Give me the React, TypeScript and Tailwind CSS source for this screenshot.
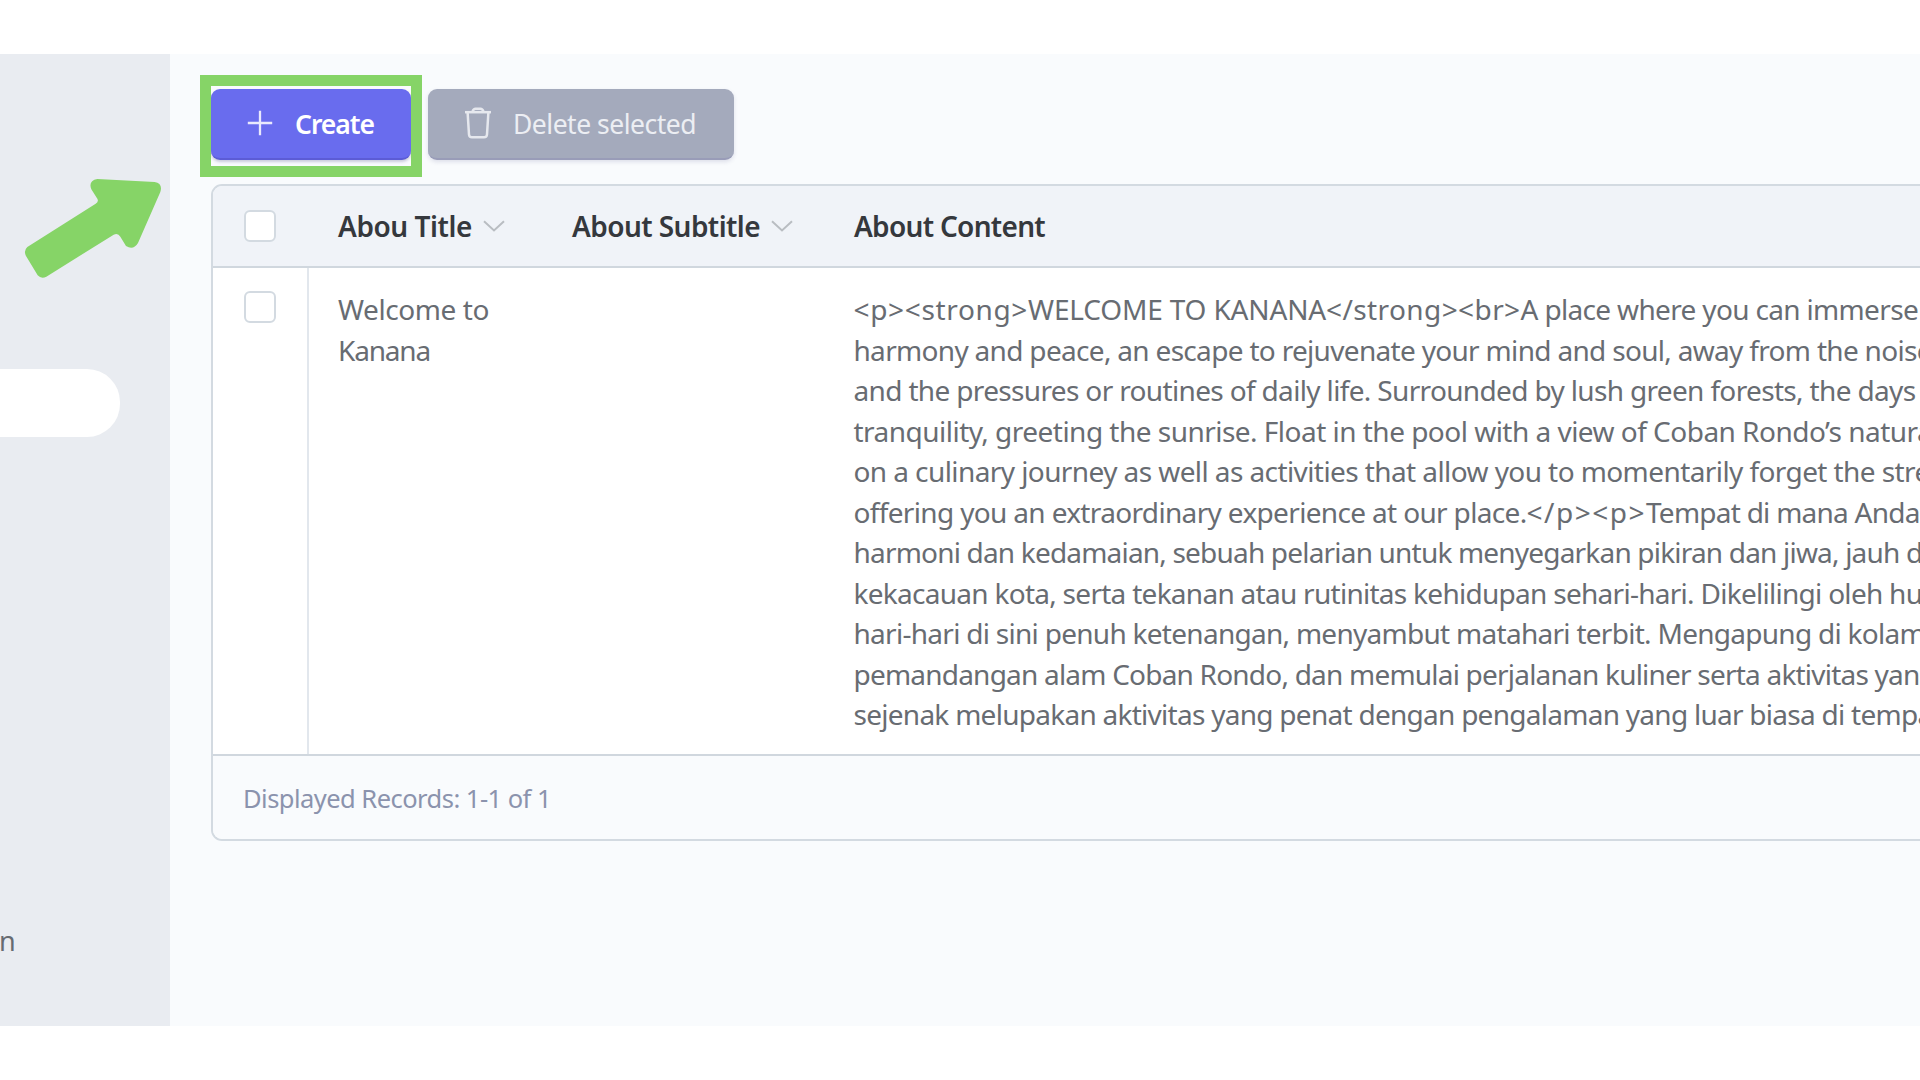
import React from "react";

const FAMILY = '"Noto Sans", "Open Sans", sans-serif';
const ctx = document.createElement("canvas").getContext("2d")!;

type FitProps = {
  text: string;
  width: number;
  size?: number;
  weight?: number;
  tail?: string;
  className?: string;
};

// One run of text, tracked so that `text` spans `width` pixels; `tail` continues it.
function Fit({ text, width, size = 28, weight = 400, tail = "", className = "" }: FitProps) {
  ctx.font = `${weight} ${size}px ${FAMILY}`;
  const spacing = (width - ctx.measureText(text).width) / text.length;
  return (
    <span
      className={`block whitespace-pre ${className}`}
      style={{ fontSize: size, fontWeight: weight, letterSpacing: `${spacing.toFixed(3)}px` }}
    >
      {text + tail}
    </span>
  );
}

type Run = [text: string, width: number, tail?: string];

const LINES: Run[][] = [
  [
    ["<p><strong>", 174.5],
    ["WELCOME TO KANANA", 298],
    ["</strong><br>", 194.5],
    ["A place where you can immerse", 397.5],
  ],
  [["harmony and peace, an escape to rejuvenate your mind and soul, away from the", 1004.5, " noise"]],
  [["and the pressures or routines of daily life. Surrounded by lush green forests, the days", 1062]],
  [["tranquility, greeting the sunrise. Float in the pool with a view of Coban Rondo’s", 988, " natural"]],
  [["on a culinary journey as well as activities that allow you to momentarily forget the", 1021.5, " stress"]],
  [
    ["offering you an extraordinary experience at our place.", 673],
    ["</p><p>", 119.5],
    ["Tempat di mana", 202, " Anda"],
  ],
  [["harmoni dan kedamaian, sebuah pelarian untuk menyegarkan pikiran dan jiwa, jauh", 1046, " dari"]],
  [["kekacauan kota, serta tekanan atau rutinitas kehidupan sehari-hari. Dikelilingi oleh", 1029, " hutan"]],
  [["hari-hari di sini penuh ketenangan, menyambut matahari terbit. Mengapung di", 987.5, " kolam"]],
  [["pemandangan alam Coban Rondo, dan memulai perjalanan kuliner serta aktivitas", 1014.5, " yang"]],
  [["sejenak melupakan aktivitas yang penat dengan pengalaman yang luar biasa di", 991, " tempat"]],
];

function Checkbox() {
  return <div className="h-8 w-8 shrink-0 rounded-[6px] border-2 border-[#d3dae1] bg-white" />;
}

function Chevron() {
  return (
    <svg className="h-3 w-[22px]" viewBox="0 0 22 12" fill="none" stroke="#b9bdc2" strokeWidth="2">
      <path d="M1 1.2 11 10.4 21 1.2" />
    </svg>
  );
}

export default function App() {
  return (
    <div className="h-[1080px] w-[1920px] overflow-hidden bg-white pt-[54px] font-['Noto_Sans','Open_Sans',sans-serif]">
      <div className="relative flex h-[972px]">
        <aside className="w-[170px] shrink-0 bg-[#e9ecf1] pt-[314.5px]">
          <div className="h-[68px] w-[120px] rounded-r-[33px] bg-white" />
          <div className="mt-[484.5px] h-10 leading-10 text-[#666b72]">
            <Fit text="n" width={17} size={27} className="-ml-px" />
          </div>
        </aside>

        <main className="min-w-0 flex-1 overflow-hidden bg-[#f9fbfd] pl-[41px] pt-[35px]">
          <div className="flex gap-[17px] leading-10">
            <button className="flex h-[71px] w-[200px] items-center rounded-[9px] border-b-2 border-[#5c5cd6] bg-[#696cee] pl-9 text-white shadow-[0_2px_3px_rgba(60,60,120,0.25)]">
              <svg className="-mt-0.5 mr-[22px] h-[26px] w-[26px]" viewBox="0 0 26 26" stroke="#e9e9fd" strokeWidth="2.3">
                <path d="M13 .8v24.4M.8 13h24.4" />
              </svg>
              <Fit text="Create" width={79} size={26.5} weight={600} />
            </button>
            <button className="flex h-[71px] w-[306px] items-center rounded-[9px] border-b-2 border-[#999cb8] bg-[#a4aabc] pl-9 text-[#eceef3] shadow-[0_2px_4px_rgba(60,60,120,0.14)]">
              <svg className="-mt-0.5 mr-[21px] h-8 w-7" viewBox="0 0 28 32" fill="none" stroke="#e6e8ee" strokeWidth="2.5" strokeLinejoin="round">
                <path d="M1 5.2h26" />
                <path d="M8.5 4.6Q9.5 1.7 11.5 1.7h5Q18.500 1.700 19.500 4.600" />
                <path d="M3.600 5.500 5 27.500Q5.200 30.300 8 30.300H20Q22.800 30.300 23 27.500L24.400 5.500" />
              </svg>
              <Fit text="Delete selected" width={183} size={26.5} />
            </button>
          </div>

          <section className="mt-[24px] w-[1760px] rounded-l-[11px] border-2 border-[#d3dae1]">
            <header className="flex h-[82px] items-center rounded-tl-[9px] border-b-2 border-[#d0d7de] bg-[#f0f3f8] pl-[31px] leading-10 text-[#35383d]">
              <Checkbox />
              <div className="ml-[62px] flex w-[234px] shrink-0 items-center gap-[11px]">
                <Fit text="Abou Title" width={134} weight={600} />
                <Chevron />
              </div>
              <div className="flex w-[282px] shrink-0 items-center gap-[11px]">
                <Fit text="About Subtitle" width={188} weight={600} />
                <Chevron />
              </div>
              <Fit text="About Content" width={191} weight={600} />
            </header>
            <div className="flex h-[488px] border-b-2 border-[#d0d7de] bg-white leading-[40.55px] text-[#686c72]">
              <div className="w-[96px] shrink-0 border-r-2 border-[#e2e7ed] pl-[31px] pt-[23px]">
                <Checkbox />
              </div>
              <div className="w-[544.5px] shrink-0 pl-[29px] pt-[21px]">
                <Fit text="Welcome to" width={151} />
                <Fit text="Kanana" width={92} />
              </div>
              <div className="shrink-0 pt-[21px]">
                {LINES.map((runs, i) => (
                  <div key={i} className="flex">
                    {runs.map(([text, width, tail]) => (
                      <Fit key={text} text={text} width={width} tail={tail} />
                    ))}
                  </div>
                ))}
              </div>
            </div>
            <footer className="flex h-[83px] items-center rounded-bl-[9px] bg-[#f9fbfd] pl-[30px] leading-10 text-[#8b93ad]">
              <Fit text="Displayed Records: 1-1 of 1" width={308} size={25.5} />
            </footer>
          </section>
        </main>

        <div className="absolute left-[200px] top-[21px] h-[102px] w-[222px] border-[11.500px] border-[#86d467]" />
        <svg className="absolute left-[20px] top-[120px] h-[110px] w-[150px]" viewBox="60 402 450 330" fill="#86d467">
          <path d="M292 417 464 426Q489 430 481 456L414 609Q400 632 378 618L361 590Q354 578 341 584L139 710Q124 718 113 706L78 648Q70 632 82 621L287 491Q297 484 292 476L274 448Q264 422 292 417Z" />
        </svg>
      </div>
    </div>
  );
}
